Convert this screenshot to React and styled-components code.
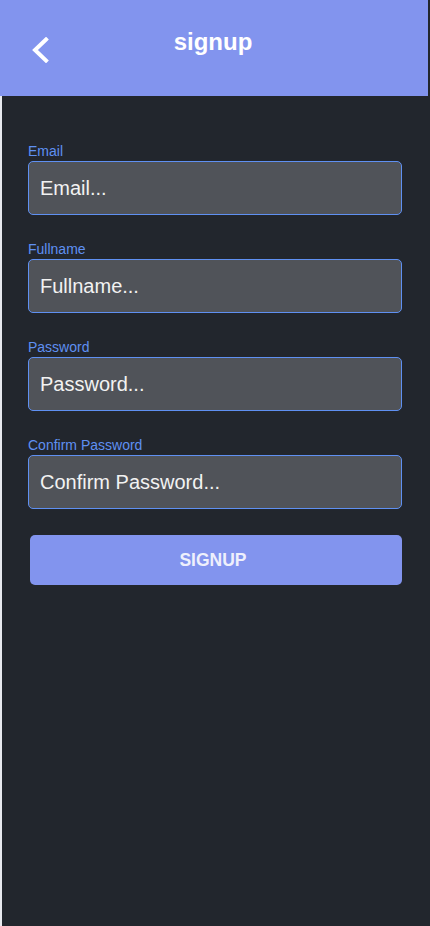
import React from "react";
import styled, { createGlobalStyle } from "styled-components";

const fields = [
  { label: "Email", placeholder: "Email...", type: "email" },
  { label: "Fullname", placeholder: "Fullname...", type: "text" },
  { label: "Password", placeholder: "Password...", type: "password" },
  { label: "Confirm Password", placeholder: "Confirm Password...", type: "password" },
];

const App = () => {
  return (
    <>
      <GlobalStyle />
      <Page>
        <Header>
          <BackButton aria-label="back">
            <svg width="18" height="26" viewBox="0 0 18 26" fill="none">
              <path
                d="M15 2.5L4 13L15 23.5"
                stroke="#fff"
                strokeWidth="4"
                strokeLinecap="square"
                strokeLinejoin="miter"
              />
            </svg>
          </BackButton>
          <Title>signup</Title>
        </Header>
        <Main>
          <Form onSubmit={(e) => e.preventDefault()}>
            {fields.map((item) => (
              <Field key={item.label}>
                <Label>{item.label}</Label>
                <Input type={item.type} placeholder={item.placeholder} />
              </Field>
            ))}
            <SubmitButton type="submit">SIGNUP</SubmitButton>
          </Form>
        </Main>
      </Page>
    </>
  );
};

export default App;

const GlobalStyle = createGlobalStyle`
  html, body {
    margin: 0;
    padding: 0;
    background: #22262d;
  }
  body {
    font-family: "Liberation Sans", Arial, sans-serif;
  }
`;

const Page = styled.div`
  min-height: 926px;
  display: flex;
  flex-direction: column;
  background: #22262d;
`;

const Header = styled.header`
  position: relative;
  width: 428px;
  height: 96px;
  background: #8294ee;
  display: flex;
  justify-content: center;
  padding: 28px 2px 0 0;
  box-sizing: border-box;
`;

const BackButton = styled.button`
  position: absolute;
  left: 31px;
  top: 37px;
  padding: 0;
  border: none;
  background: none;
  cursor: pointer;
  display: flex;
`;

const Title = styled.h1`
  margin: 0;
  color: #ffffff;
  font-size: 24px;
  font-weight: 700;
  line-height: 28px;
`;

const Main = styled.main`
  flex: 1;
  border-left: 2px solid #e8e9ee;
  padding: 47px 28px 0 26px;
`;

const Form = styled.form`
  display: flex;
  flex-direction: column;
  gap: 26px;
`;

const Field = styled.div`
  display: flex;
  flex-direction: column;
  gap: 1px;
`;

const Label = styled.label`
  color: #5f90f2;
  font-size: 14px;
  line-height: 17px;
`;

const Input = styled.input`
  height: 54px;
  box-sizing: border-box;
  border: 1px solid #5f90f2;
  border-radius: 5px;
  background: #505359;
  padding: 0 11px;
  font-family: "Liberation Sans", Arial, sans-serif;
  font-size: 20px;
  color: #ffffff;
  outline: none;
  &::placeholder {
    color: #f2f2f2;
    opacity: 1;
  }
`;

const SubmitButton = styled.button`
  margin-left: 2px;
  height: 50px;
  padding: 0 6px 0 0;
  border: none;
  border-radius: 5px;
  background: #8294ee;
  color: #eef0fc;
  font-family: "Liberation Sans", Arial, sans-serif;
  font-size: 17.5px;
  font-weight: 700;
  cursor: pointer;
`;
